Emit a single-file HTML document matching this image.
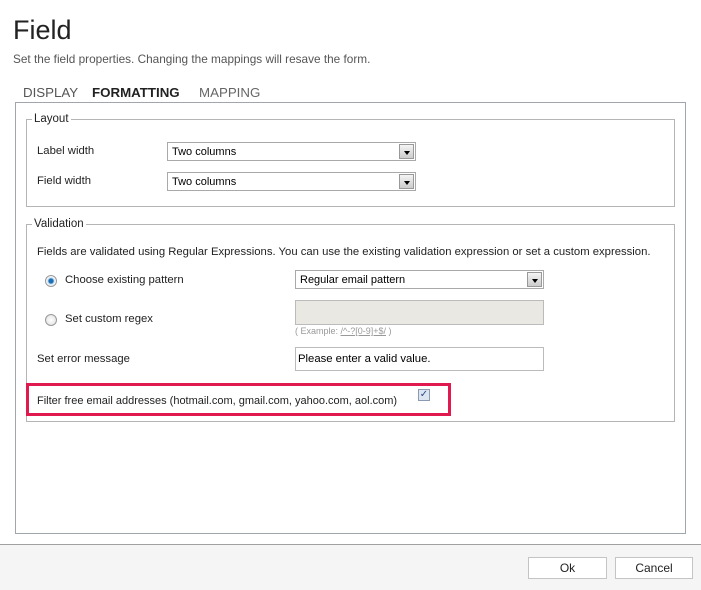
<!DOCTYPE html>
<html><head><style>
*{margin:0;padding:0;box-sizing:border-box}
body{width:701px;height:590px;position:relative;background:#fff;font-family:"Liberation Sans",sans-serif;color:#222;overflow:hidden}
.a{position:absolute;white-space:nowrap}
.t{font-size:11.3px;color:#222}
.box{position:absolute;border:1px solid #a5acb2}
.sel{position:absolute;border:1px solid #a9a9a9;background:#fff;font-size:11px;padding:3px 4px;color:#000}
.arr{position:absolute;right:1px;top:1px;width:15px;height:15px;border:1px solid #999;background:linear-gradient(#f4f4f4,#ccc)}
.arr:after{content:"";position:absolute;left:4px;top:6px;border-left:3px solid transparent;border-right:3px solid transparent;border-top:4px solid #000}
.leg{position:absolute;background:#fff;font-size:11.5px;padding:0 2px;color:#222}
.btn{position:absolute;border:1px solid #c4c4c4;background:#fff;font-size:12px;text-align:center;line-height:20px;color:#222}
.rad{position:absolute;width:12px;height:12px;border-radius:50%;border:1px solid #999;background:radial-gradient(#fff,#ddd)}
</style></head><body>
<div class="a" style="left:13px;top:15px;font-size:27px;color:#222">Field</div>
<div class="a" style="left:13px;top:52px;font-size:11.8px;color:#555">Set the field properties. Changing the mappings will resave the form.</div>
<div class="a" style="left:23px;top:85px;font-size:13.3px;color:#555">DISPLAY</div>
<div class="a" style="left:92px;top:85px;font-size:13.3px;font-weight:bold;color:#222">FORMATTING</div>
<div class="a" style="left:199px;top:85px;font-size:13.3px;color:#666">MAPPING</div>
<div class="box" style="left:15px;top:102px;width:671px;height:432px;border-color:#a0a6ab"></div>

<div class="box" style="left:26px;top:119px;width:649px;height:88px;border-color:#b5b5b5"></div>
<div class="leg" style="left:32px;top:113px">Layout</div>
<div class="a t" style="left:37px;top:145px">Label width</div>
<div class="sel" style="left:167px;top:142px;width:249px;height:19px">Two columns<div class="arr"></div></div>
<div class="a t" style="left:37px;top:175px">Field width</div>
<div class="sel" style="left:167px;top:172px;width:249px;height:19px">Two columns<div class="arr"></div></div>

<div class="box" style="left:26px;top:224px;width:649px;height:198px;border-color:#b5b5b5"></div>
<div class="leg" style="left:32px;top:218px">Validation</div>
<div class="a t" style="left:37px;top:246px">Fields are validated using Regular Expressions. You can use the existing validation expression or set a custom expression.</div>
<div class="rad" style="left:45px;top:275px;background:radial-gradient(#1a6fb5 30%,#cfe2f0 45%,#fff 70%)"></div>
<div class="a t" style="left:65px;top:274px">Choose existing pattern</div>
<div class="sel" style="left:295px;top:270px;width:249px;height:19px">Regular email pattern<div class="arr"></div></div>
<div class="rad" style="left:45px;top:314px"></div>
<div class="a t" style="left:65px;top:313px">Set custom regex</div>
<div class="a" style="left:295px;top:300px;width:249px;height:25px;border:1px solid #bbb;background:#eae8e3"></div>
<div class="a" style="left:295px;top:326px;font-size:9px;color:#999">( Example: <u>/^-?[0-9]+$/</u> )</div>
<div class="a t" style="left:37px;top:353px">Set error message</div>
<div class="a" style="left:295px;top:347px;width:249px;height:24px;border:1px solid #bbb;font-size:11.3px;padding:5px 2px;color:#000">Please enter a valid value.</div>
<div class="a" style="left:26px;top:383px;width:425px;height:33px;border:3px solid #e0194f"></div>
<div class="a t" style="left:37px;top:395px;font-size:11px">Filter free email addresses (hotmail.com, gmail.com, yahoo.com, aol.com)</div>
<div class="a" style="left:418px;top:389px;width:12px;height:12px;border:1px solid #8a9ab0;background:#dde6f0;font-size:10px;line-height:10px;text-align:center;color:#2a4a8a">✓</div>

<div class="a" style="left:0;top:544px;width:701px;height:46px;background:#f5f5f5;border-top:1px solid #a0a0a0"></div>
<div class="btn" style="left:528px;top:557px;width:79px;height:22px">Ok</div>
<div class="btn" style="left:615px;top:557px;width:78px;height:22px">Cancel</div>
</body></html>
